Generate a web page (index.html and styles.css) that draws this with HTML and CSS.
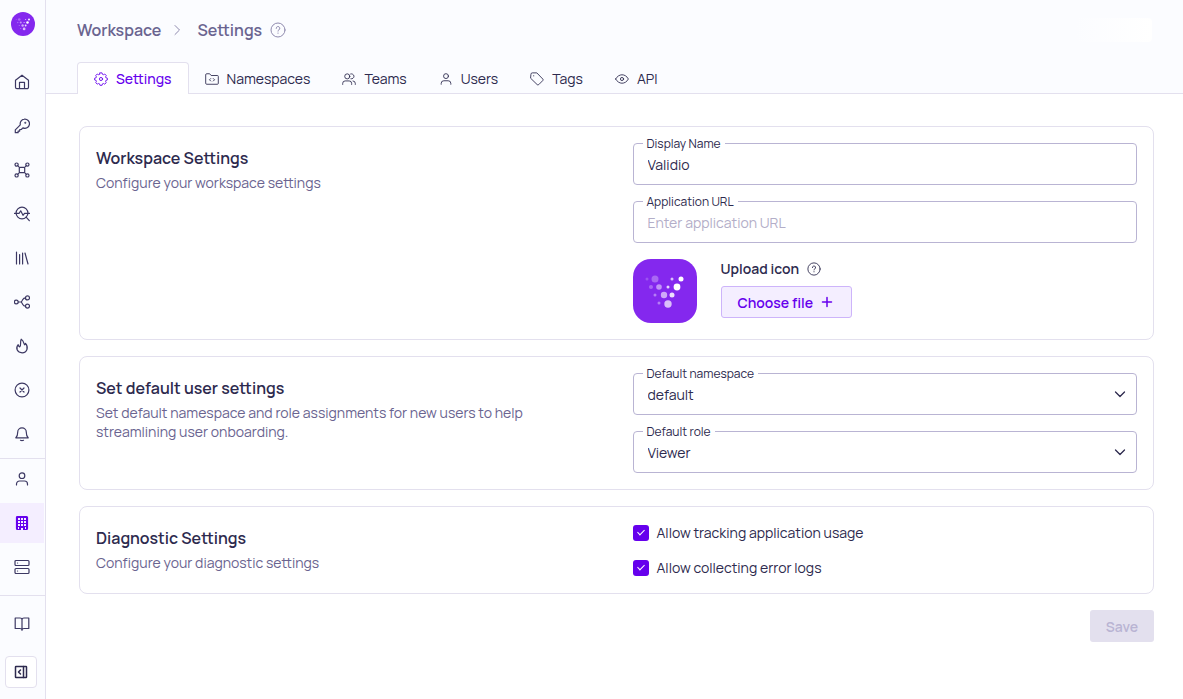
FILE: index.html
```html
<!DOCTYPE html>
<html lang="en">
<head>
  <meta charset="utf-8">
  <meta name="viewport" content="width=device-width, initial-scale=1">
  <title>Workspace Settings</title>
  <link rel="stylesheet" href="styles.css">
</head>
<body>

<!-- Validio logo dots, shared by the sidebar and the upload preview -->
<svg width="0" height="0" class="defs" aria-hidden="true">
  <symbol id="logo-dots" viewBox="0 0 64 64">
    <g fill="#fff">
      <circle cx="14" cy="20" r="1.5" opacity=".2"/>
      <circle cx="22" cy="20" r="3.5" opacity=".3"/>
      <circle cx="39" cy="20" r="1.5" opacity=".7"/>
      <circle cx="48" cy="20" r="2.5"/>
      <circle cx="18" cy="28" r="2" opacity=".3"/>
      <circle cx="26" cy="28" r="2.8" opacity=".5"/>
      <circle cx="35" cy="28" r="1.5" opacity=".8"/>
      <circle cx="44" cy="28" r="3.4"/>
      <circle cx="22" cy="36" r="1.5" opacity=".4"/>
      <circle cx="31" cy="36" r="3.2" opacity=".6"/>
      <circle cx="39" cy="36" r="2.5" opacity=".85"/>
      <circle cx="26" cy="44" r="1.5" opacity=".4"/>
      <circle cx="35" cy="45" r="3.7" opacity=".7"/>
    </g>
  </symbol>
  <symbol id="user" viewBox="0 0 16 16">
    <circle cx="8" cy="4.7" r="2.8"/>
    <path d="M2.500 14v-1a3 3 0 0 1 3-3h5a3 3 0 0 1 3 3v1"/>
  </symbol>
  <symbol id="help" viewBox="0 0 16 16">
    <circle cx="8" cy="8" r="7"/>
    <path d="M6.200 6.400a1.800 1.800 0 1 1 2.700 1.500c-.6.3-.9.6-.9 1.200M8 11v.3"/>
  </symbol>
  <symbol id="chevron" viewBox="0 0 16 16">
    <path d="M3.500 6 8 10.500l4.500-4.500"/>
  </symbol>
</svg>

<div class="app">
  <nav class="sidebar" aria-label="Main">
    <a class="brand" href="#" aria-label="Validio">
      <svg class="brand-dots"><use href="#logo-dots"/></svg>
    </a>

    <div class="nav-group">
      <a class="nav-item" href="#" aria-label="Home">
        <svg class="icon" viewBox="0 0 16 16"><path d="M1.500 6.300 8 1.200l6.500 5.100v7a1.400 1.400 0 0 1-1.400 1.400H2.900a1.400 1.400 0 0 1-1.400-1.400zM5.500 14.500V8.300h5v6.200"/></svg>
      </a>
      <a class="nav-item" href="#" aria-label="Credentials">
        <svg class="icon" viewBox="0 0 16 16"><path d="M10.200 1.200a4.600 4.600 0 1 1-1.300 8.700L7.300 11.500H5.700v1.600H4.100v1.600H1.300v-2.900l5-5a4.600 4.600 0 0 1 3.900-5.600z"/><circle cx="11.300" cy="4.800" r=".4"/></svg>
      </a>
      <a class="nav-item" href="#" aria-label="Sources">
        <svg class="icon" viewBox="0 0 16 16"><rect x="5.300" y="5.300" width="5.400" height="5.400" rx="1"/><circle cx="2.600" cy="2.600" r="1.600"/><circle cx="13.400" cy="2.600" r="1.600"/><circle cx="2.600" cy="13.400" r="1.600"/><circle cx="13.400" cy="13.400" r="1.600"/><path d="m3.700 3.700 1.900 1.900M12.300 3.700l-1.900 1.900M3.700 12.300l1.900-1.900M12.300 12.300l-1.900-1.900"/></svg>
      </a>
      <a class="nav-item" href="#" aria-label="Validators">
        <svg class="icon" viewBox="0 0 16 16"><circle cx="8" cy="7" r="5.900"/><path d="m12.100 11.200 3.200 3.500M.5 7.300h4.700l1.500-2.500 2.300 4.500 1.500-2h5"/></svg>
      </a>
      <a class="nav-item" href="#" aria-label="Catalog">
        <svg class="icon" viewBox="0 0 16 16"><path d="M2.500 2v12M5.600 4.500V14M8.600 3v11M11 3l3 11"/></svg>
      </a>
      <a class="nav-item" href="#" aria-label="Lineage">
        <svg class="icon" viewBox="0 0 16 16"><circle cx="2.300" cy="8" r="1.900"/><circle cx="13.500" cy="3.900" r="2"/><circle cx="13.500" cy="12.100" r="2"/><path d="M4.300 8h2.900M11.500 3.900c-2 0-2.200.7-3.100 2.300L7.300 8l1.100 1.800c.9 1.600 1.100 2.300 3.100 2.300"/></svg>
      </a>
      <a class="nav-item" href="#" aria-label="Incidents">
        <svg class="icon" viewBox="0 0 16 16"><path d="M7.200 1.200c3.200 2 2 4.300 3.500 5.600.5-.3.700-.8.800-1.400 3.300 3.800 1.700 9.400-3.400 9.400-4.800 0-6.900-4.500-3.900-8.100.1 1.100.5 1.900 1.500 2.200C7.500 7 5.800 4 7.200 1.200z"/></svg>
      </a>
      <a class="nav-item" href="#" aria-label="Rejected">
        <svg class="icon" viewBox="0 0 16 16"><circle cx="8" cy="8" r="6.900"/><path d="m6 6 4 4M10 6l-4 4"/></svg>
      </a>
      <a class="nav-item" href="#" aria-label="Notifications">
        <svg class="icon" viewBox="0 0 16 16"><path d="M3.700 6.200a4.300 4.300 0 0 1 8.600 0c0 3.300.8 4.700 1.900 5.600H1.800c1.100-.9 1.900-2.300 1.900-5.600zM6.500 14.300c.9.500 2.100.5 3 0"/></svg>
      </a>
    </div>

    <div class="nav-group nav-group-admin">
      <a class="nav-item" href="#" aria-label="Profile">
        <svg class="icon"><use href="#user"/></svg>
      </a>
      <a class="nav-item active" href="#" aria-label="Workspace" aria-current="page">
        <svg class="icon" viewBox="0 0 16 16">
          <rect x="2.500" y="1.500" width="11" height="13" rx="1" fill="currentColor"/>
          <path class="windows" d="M4 3h2v2H4zM7 3h2v2H7zM10 3h2v2h-2zM4 6h2v2H4zM7 6h2v2H7zM10 6h2v2h-2zM4 9h2v2H4zM7 9h2v2H7zM10 9h2v2h-2zM4 12h1v2H4zM7 13h2v2H7zM11 12h1v2h-1z"/>
        </svg>
      </a>
      <a class="nav-item" href="#" aria-label="Servers">
        <svg class="icon" viewBox="0 0 16 16"><rect x="1" y="1.500" width="14" height="5" rx="1"/><rect x="1" y="9.500" width="14" height="5" rx="1"/><path d="M3.500 4h.1M3.500 12h.1"/></svg>
      </a>
    </div>

    <div class="nav-group nav-group-docs">
      <a class="nav-item" href="#" aria-label="Documentation">
        <svg class="icon" viewBox="0 0 16 16"><path d="M8 3.500v10.800M8 3.700c0-1.100-.8-1.700-2-1.700H1.200v10.500h4.700c1.200 0 2.100.5 2.100 1.500 0-1 .9-1.500 2.100-1.500h4.700V2H10c-1.200 0-2 .6-2 1.700z"/></svg>
      </a>
    </div>

    <button class="expand" type="button" aria-label="Expand menu">
      <svg class="icon" viewBox="0 0 16 16"><rect x="2.500" y="2.500" width="11" height="11" rx=".5"/><path d="M10.500 2.500v11M7.500 6 5.500 8l2 2"/></svg>
    </button>
  </nav>

  <div class="page">
    <header class="header">
      <div class="title-row">
        <ol class="breadcrumb">
          <li><a href="#">Workspace</a></li>
          <li class="crumb-arrow"><svg class="icon"><use href="#chevron"/></svg></li>
          <li>Settings</li>
          <li class="crumb-help"><svg class="icon"><use href="#help"/></svg></li>
        </ol>
        <div class="header-fade"></div>
      </div>

      <nav class="tabs" aria-label="Settings sections">
        <a class="tab active" href="#">
          <svg class="icon" viewBox="0 0 16 16"><path d="M6.800 1h2.400l.5 1.700 1 .4 1.600-.8 1.700 1.700-.8 1.600.4 1 1.700.5v2l-1.700.5-.4 1 .8 1.600-1.700 1.700-1.600-.8-1 .4-.5 1.700H6.800l-.5-1.700-1-.4-1.600.8L2 12.200l.8-1.600-.4-1L.7 9.100v-2l1.700-.5.4-1L2 4l1.700-1.700 1.600.8 1-.4z"/><circle cx="8" cy="8" r="1.800"/></svg>
          Settings
        </a>
        <a class="tab" href="#">
          <svg class="icon" viewBox="0 0 16 16"><path d="M.8 3a1 1 0 0 1 1-1h3.500L7 4h7.200a1 1 0 0 1 1 1v8a1 1 0 0 1-1 1H1.800a1 1 0 0 1-1-1zM6.500 7.500 5.100 8.900l1.400 1.400M9.500 7.500l1.400 1.400-1.400 1.400"/></svg>
          Namespaces
        </a>
        <a class="tab" href="#">
          <svg class="icon" viewBox="0 0 16 16"><circle cx="6" cy="5" r="2.900"/><path d="M.8 14.200V13A2.800 2.800 0 0 1 3.600 10.200h4.600A2.800 2.800 0 0 1 11 13v1.200M9.900 2.200a2.900 2.900 0 1 1 .3 5.600M12.600 10.200a2.800 2.800 0 0 1 2.600 2.800v1.200"/></svg>
          Teams
        </a>
        <a class="tab" href="#">
          <svg class="icon"><use href="#user"/></svg>
          Users
        </a>
        <a class="tab" href="#">
          <svg class="icon" viewBox="0 0 16 16"><path d="M1 2.600A1.600 1.600 0 0 1 2.600 1h5.200l6.800 7a1.300 1.300 0 0 1 0 1.800l-4.600 4.600a1.300 1.300 0 0 1-1.800 0L1 7.400zM4.200 4.200v.3"/></svg>
          Tags
        </a>
        <a class="tab" href="#">
          <svg class="icon" viewBox="0 0 16 16"><path d="M.7 8C4.300 1.500 11.700 1.500 15.300 8c-3.600 6.500-11 6.500-14.600 0z"/><circle cx="8" cy="8" r="1.800"/></svg>
          API
        </a>
      </nav>
    </header>

    <main>
      <form class="settings">
        <section class="card">
          <div class="card-info">
            <h2>Workspace Settings</h2>
            <p>Configure your workspace settings</p>
          </div>
          <div class="card-fields">
            <div class="field">
              <label for="displayName">Display Name</label>
              <input type="text" id="displayName" name="displayName" value="Validio">
            </div>
            <div class="field">
              <label for="appUrl">Application URL</label>
              <input type="text" id="appUrl" name="appUrl" placeholder="Enter application URL">
            </div>
            <div class="upload">
              <div class="upload-preview">
                <svg width="64" height="64"><use href="#logo-dots"/></svg>
              </div>
              <div class="upload-controls">
                <div class="upload-label">Upload icon <svg class="icon"><use href="#help"/></svg></div>
                <button class="btn-secondary" type="button">
                  Choose file
                  <svg class="icon" viewBox="0 0 16 16"><path d="M8 3.500v9M3.500 8h9"/></svg>
                </button>
              </div>
            </div>
          </div>
        </section>

        <section class="card">
          <div class="card-info">
            <h2>Set default user settings</h2>
            <p>Set default namespace and role assignments for new users to help streamlining user onboarding.</p>
          </div>
          <div class="card-fields">
            <div class="field">
              <label for="namespace">Default namespace</label>
              <select id="namespace" name="namespace">
                <option>default</option>
              </select>
              <svg class="icon select-arrow"><use href="#chevron"/></svg>
            </div>
            <div class="field">
              <label for="role">Default role</label>
              <select id="role" name="role">
                <option>Viewer</option>
              </select>
              <svg class="icon select-arrow"><use href="#chevron"/></svg>
            </div>
          </div>
        </section>

        <section class="card">
          <div class="card-info">
            <h2>Diagnostic Settings</h2>
            <p>Configure your diagnostic settings</p>
          </div>
          <div class="card-fields">
            <label class="check"><input type="checkbox" name="usage" checked> Allow tracking application usage</label>
            <label class="check"><input type="checkbox" name="errors" checked> Allow collecting error logs</label>
          </div>
        </section>

        <div class="actions">
          <button class="btn-save" type="submit" disabled>Save</button>
        </div>
      </form>
    </main>
  </div>
</div>

</body>
</html>
```

FILE: styles.css
```css
* {
  box-sizing: border-box;
}

body {
  margin: 0;
  font-family: Manrope, Inter, "Liberation Sans", sans-serif;
  font-size: 14px;
  line-height: 19px;
  color: #2d2a4e;
  background: #fff;
}

a {
  color: inherit;
  text-decoration: none;
}

button, input, select {
  font: inherit;
  color: inherit;
}

.defs {
  position: absolute;
}

.icon {
  width: 16px;
  height: 16px;
  flex: none;
  fill: none;
  stroke: currentColor;
  stroke-width: 1;
  stroke-linecap: round;
  stroke-linejoin: round;
}

.app {
  display: flex;
  min-height: 100vh;
}

/* Sidebar */
.sidebar {
  display: flex;
  flex-direction: column;
  width: 46px;
  flex: none;
  padding-top: 12px;
  background: #fbfcff;
  border-right: 1px solid #e3e0ee;
}

.brand {
  width: 24px;
  height: 24px;
  margin: 0 0 26px 11px;
  border-radius: 50%;
  background: #8428ee;
}

.brand-dots {
  display: block;
  width: 24px;
  height: 24px;
}

.nav-group {
  display: flex;
  flex-direction: column;
  gap: 4px;
  padding-bottom: 4px;
}

.nav-group-admin {
  border-top: 1px solid #e3e0ee;
  padding-bottom: 8px;
}

.nav-group-docs {
  border-top: 1px solid #e3e0ee;
  padding-top: 8px;
}

.nav-item {
  display: flex;
  align-items: center;
  justify-content: center;
  width: 44px;
  height: 40px;
  color: #3c3863;
}

.nav-item .icon {
  stroke-width: 1.2;
}

.nav-item.active {
  color: #6600ed;
  background: #f4eeff;
}

.nav-item .windows {
  fill: #f4eeff;
  stroke: none;
}

.expand {
  display: flex;
  align-items: center;
  justify-content: center;
  width: 32px;
  height: 32px;
  margin: 8px 0 8px 5px;
  padding: 0;
  border: 1px solid #e3e0ee;
  border-radius: 4px;
  background: #fff;
}

.expand .icon {
  stroke-width: 1.5;
}

/* Header */
.page {
  flex: 1;
  min-width: 0;
}

.header {
  padding: 0 31px;
  background: #fbfcff;
  border-bottom: 1px solid #e3e0ee;
}

.title-row {
  display: flex;
  align-items: center;
  justify-content: space-between;
  height: 60px;
}

.breadcrumb {
  display: flex;
  align-items: center;
  margin: 0;
  padding: 0;
  list-style: none;
  font-size: 16px;
  font-weight: 600;
  color: #6a6490;
}

.breadcrumb .icon {
  display: block;
}

.crumb-arrow {
  margin: 0 12px 0 8px;
  color: #8f8aae;
  transform: rotate(-90deg);
}

.crumb-help {
  margin-left: 8px;
  color: #8f8aae;
}

.header-fade {
  width: 77px;
  height: 24px;
  border-radius: 4px;
  background: linear-gradient(90deg, #fbfcff, #fff);
}

.tabs {
  display: flex;
  margin: 2px 0 -1px;
}

.tab {
  display: flex;
  align-items: center;
  gap: 8px;
  height: 32px;
  padding: 0 15px;
  border: 1px solid transparent;
  border-bottom: 0;
}

.tab .icon {
  width: 14px;
  height: 14px;
}

.tab.active {
  padding: 0 16px;
  color: #6600ed;
  font-weight: 500;
  background: #fff;
  border-color: #e3e0ee;
  border-radius: 4px 4px 0 0;
}

/* Settings cards */
.settings {
  display: flex;
  flex-direction: column;
  gap: 16px;
  padding: 32px 29px 32px 33px;
}

.card {
  display: grid;
  grid-template-columns: 1fr 1fr;
  gap: 32px;
  padding: 16px;
  border: 1px solid #e3e0ee;
  border-radius: 8px;
}

.card-info {
  padding-top: 4px;
}

.card-info h2 {
  margin: 0 0 4px;
  font-size: 16px;
  font-weight: 600;
  line-height: 22px;
}

.card-info p {
  max-width: 460px;
  margin: 0;
  color: #6a6490;
}

.card-fields {
  display: flex;
  flex-direction: column;
  gap: 16px;
}

.field {
  position: relative;
}

/* label sits on the top border of the box */
.field label {
  position: absolute;
  top: -7px;
  left: 10px;
  padding: 0 4px;
  font-size: 12px;
  line-height: 16px;
  background: #fff;
}

.field input,
.field select {
  display: block;
  width: 100%;
  height: 42px;
  padding: 0 13px 0 14px;
  border: 1px solid #b9b4d3;
  border-radius: 4px;
  background: #fff;
  appearance: none;
}

.field input::placeholder {
  color: #b3aec8;
}

.select-arrow {
  position: absolute;
  top: 13px;
  right: 9px;
  stroke-width: 1.3;
  pointer-events: none;
}

.upload {
  display: flex;
  gap: 24px;
}

.upload-preview {
  width: 64px;
  height: 64px;
  border-radius: 18px;
  background: #8428ee;
}

.upload-label {
  display: flex;
  align-items: center;
  gap: 8px;
  margin-bottom: 8px;
  font-weight: 600;
}

.upload-label .icon {
  width: 14px;
  height: 14px;
}

.btn-secondary {
  display: flex;
  align-items: center;
  gap: 6px;
  height: 32px;
  padding: 0 16px;
  border: 1px solid #cdb4fa;
  border-radius: 3px;
  font-weight: 600;
  color: #6600ed;
  background: #f4eeff;
}

.btn-secondary .icon {
  stroke-width: 1.5;
}

.check {
  display: flex;
  align-items: center;
  gap: 8px;
}

.check input {
  display: grid;
  place-items: center;
  width: 16px;
  height: 16px;
  margin: 0;
  border-radius: 3px;
  background: #6600ed;
  appearance: none;
}

.check input::before {
  content: "";
  width: 3px;
  height: 6px;
  margin-bottom: 2px;
  box-sizing: content-box;
  border: solid #fff;
  border-width: 0 1px 1px 0;
  transform: rotate(45deg);
}

.check input:not(:checked) {
  background: #fff;
  border: 1px solid #b9b4d3;
}

.actions {
  display: flex;
  justify-content: flex-end;
}

.btn-save {
  height: 32px;
  padding: 0 16px;
  border: 0;
  border-radius: 3px;
  font-weight: 600;
  color: #b9b4d3;
  background: #e3e0ee;
}
```
